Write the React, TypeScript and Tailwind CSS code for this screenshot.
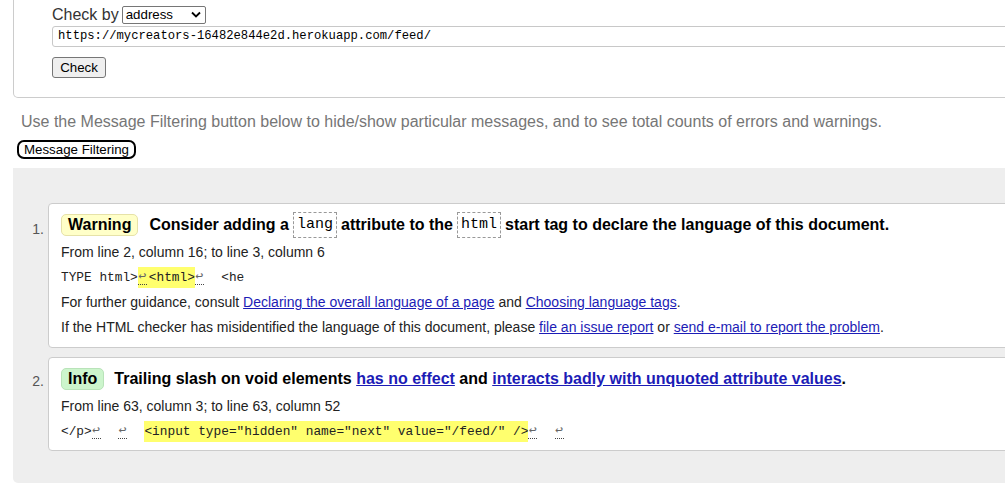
import React from 'react';

const LINK = 'text-[#1c1cb6] underline';
const MONO = "font-['Liberation_Mono','DejaVu_Sans_Mono',monospace]";

function Lf() {
  // line feed marker shown by the checker
  return (
    <span className="inline-block w-[11px] align-middle leading-[14px]">
      <span className="inline-block w-[9px] text-center text-[13px] text-[#666] border-b border-dotted border-[#444]">↩</span>
    </span>
  );
}

function Badge({ kind }: { kind: 'warning' | 'info' }) {
  return kind === 'warning' ? (
    <span className="h-[22px] px-[6px] flex items-center rounded-[5px] border border-[#e6e2a8] bg-[#ffffc8] font-bold text-[16px] text-black">
      Warning
    </span>
  ) : (
    <span className="h-[22px] px-[6px] flex items-center rounded-[5px] border border-[#b9e3b9] bg-[#ccf5cc] font-bold text-[16px] text-black">
      Info
    </span>
  );
}

function Tag({ children }: { children: React.ReactNode }) {
  return (
    <code className={`${MONO} inline-block font-normal text-[15px] leading-[24px] px-[3px] mx-[4px] border border-dashed border-[#999] bg-white`}>
      {children}
    </code>
  );
}

export default function App() {
  return (
    <div className="w-[1005px] h-[492px] overflow-hidden bg-white font-['Liberation_Sans',Arial,sans-serif] text-[#222]">
      {/* Check form */}
      <div className="ml-[13px] w-[1100px] h-[98px] border-x border-b border-[#ccc] rounded-b-[5px] pl-[38px]">
        <div className="pt-[5px] h-[24px] flex items-center">
          <span className="text-[16px] leading-[19px] text-[#333]">Check by</span>
          <div className="ml-[3px] h-[18px] w-[84px] border border-[#767676] rounded-[2px] flex items-center justify-between pl-[3px] pr-[4px] text-[13.3px] text-black">
            <span>address</span>
            <svg width="10" height="7" viewBox="0 0 10 7">
              <path d="M1 1.5 L5 5.5 L9 1.5" stroke="#000" strokeWidth="1.8" fill="none" />
            </svg>
          </div>
        </div>
        <div className={`mt-[2px] h-[21px] border border-[#c8c8c8] rounded-l-[3px] pl-[5px] flex items-center ${MONO} text-[12.2px] text-black`}>
          https://mycreators-16482e844e2d.herokuapp.com/feed/
        </div>
        <button className="mt-[10px] h-[21px] w-[54px] border border-[#767676] bg-[#efefef] rounded-[3px] text-[13.3px] text-black flex items-center justify-center">
          Check
        </button>
      </div>

      <p className="ml-[21px] mt-[14px] text-[16px] leading-[20px] text-[#767676]">
        Use the Message Filtering button below to hide/show particular messages, and to see total counts of errors and warnings.
      </p>
      <button className="ml-[17px] mt-[8px] h-[19px] px-[5px] border-2 border-black rounded-[7px] bg-white text-[13.3px] leading-[15px] text-black flex items-center">
        Message Filtering
      </button>

      {/* Results */}
      <div className="mt-[9px] ml-[13px] w-[1100px] bg-[#eeeeee] rounded-bl-[5px] pt-[35px] pb-[32px]">
        <ol className="flex flex-col gap-[9px]">
          <li className="flex">
            <div className="w-[35px] pt-[16px] pr-[4px] text-right text-[14px] text-[#555]">1.</div>
            <div className="flex-1 bg-white border border-[#ccc] rounded-[4px] pl-[12px] pt-[10px] pb-[7px]">
              <div className="h-[22px] flex items-center">
                <Badge kind="warning" />
                <span className="ml-[11px] font-bold text-[16px] text-black whitespace-nowrap flex items-center">
                  Consider adding a<Tag>lang</Tag>attribute to the<Tag>html</Tag>start tag to declare the language of this document.
                </span>
              </div>
              <div className="mt-[4px] text-[14px] leading-[25px]">
                <p>From line 2, column 16; to line 3, column 6</p>
                <p className={`${MONO} text-[12.8px] text-[#222] whitespace-pre`}>
                  TYPE html&gt;<mark className="bg-[#ffff6e] text-[#222] py-[3px]"><Lf />&lt;html&gt;</mark><Lf />{'  '}&lt;he
                </p>
                <p className="whitespace-pre">
                  For further guidance, consult <a className={LINK}>Declaring the overall language of a page</a> and <a className={LINK}>Choosing language tags</a>.
                </p>
                <p className="whitespace-pre">
                  If the HTML checker has misidentified the language of this document, please <a className={LINK}>file an issue report</a> or <a className={LINK}>send e-mail to report the problem</a>.
                </p>
              </div>
            </div>
          </li>
          <li className="flex">
            <div className="w-[35px] pt-[14px] pr-[4px] text-right text-[14px] text-[#555]">2.</div>
            <div className="flex-1 bg-white border border-[#ccc] rounded-[4px] pl-[12px] pt-[10px] pb-[6px]">
              <div className="h-[22px] flex items-center">
                <Badge kind="info" />
                <span className="ml-[10px] font-bold text-[16px] text-black whitespace-pre">
                  Trailing slash on void elements <a className={LINK}>has no effect</a> and <a className={LINK}>interacts badly with unquoted attribute values</a>.
                </span>
              </div>
              <div className="mt-[4px] text-[14px] leading-[25px]">
                <p>From line 63, column 3; to line 63, column 52</p>
                <p className={`${MONO} text-[12.8px] text-[#222] whitespace-pre`}>
                  &lt;/p&gt;<Lf />{'  '}<Lf />{'  '}<mark className="bg-[#ffff6e] text-[#222] py-[3px]">&lt;input type="hidden" name="next" value="/feed/" /&gt;</mark><Lf />{'  '}<Lf />
                </p>
              </div>
            </div>
          </li>
        </ol>
      </div>
    </div>
  );
}
